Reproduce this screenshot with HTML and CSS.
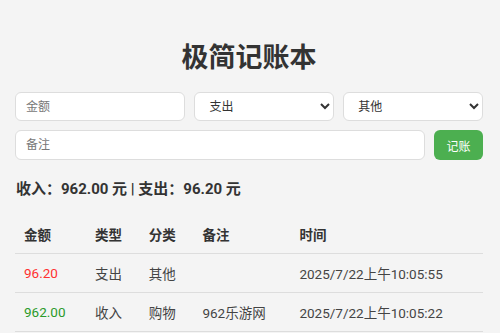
FILE: index.html
```html
<!DOCTYPE html>
<html lang="zh-CN">
<head>
  <meta charset="UTF-8">
  <title>极简记账本</title>
  <link rel="stylesheet" href="styles.css">
</head>
<body>
  <div class="container">
    <h1>极简记账本</h1>

    <div class="form-row">
      <input type="number" id="amount" placeholder="金额">
      <select id="type">
        <option>支出</option>
        <option>收入</option>
      </select>
      <select id="category">
        <option>其他</option>
        <option>购物</option>
        <option>餐饮</option>
      </select>
    </div>

    <div class="form-row second">
      <input type="text" id="note" placeholder="备注">
      <button id="addBtn">记账</button>
    </div>

    <p class="summary">收入：962.00 元 | 支出：96.20 元</p>

    <table class="records">
      <thead>
        <tr>
          <th>金额</th>
          <th>类型</th>
          <th>分类</th>
          <th>备注</th>
          <th>时间</th>
        </tr>
      </thead>
      <tbody>
        <tr>
          <td class="expense">96.20</td>
          <td>支出</td>
          <td>其他</td>
          <td></td>
          <td>2025/7/22上午10:05:55</td>
        </tr>
        <tr>
          <td class="income">962.00</td>
          <td>收入</td>
          <td>购物</td>
          <td>962乐游网</td>
          <td>2025/7/22上午10:05:22</td>
        </tr>
      </tbody>
    </table>
  </div>
</body>
</html>
```

FILE: styles.css
```css
body {
  font-family: Roboto, "Noto Sans CJK SC", sans-serif;
  background: #f4f4f4;
  color: #333;
  margin: 0;
}

.container {
  max-width: 468px;
  margin: 0 15px;
}

h1 {
  text-align: center;
  font-size: 27px;
  margin: 40px 0 16px;
  line-height: 36px;
  color: #333;
}

.form-row {
  display: grid;
  grid-template-columns: minmax(0, 1.22fr) minmax(0, 1fr) minmax(0, 1fr);
  gap: 9px;
  margin-bottom: 9px;
}

.form-row.second {
  grid-template-columns: minmax(0, 1fr) 49px;
}

input,
select {
  width: 100%;
  height: 29px;
  box-sizing: border-box;
  padding: 0 10px;
  font-family: inherit;
  font-size: 12px;
  color: #333;
  background: #fff;
  border: 1px solid #ddd;
  border-radius: 6px;
  outline: none;
}

.second input {
  height: 30px;
}

input::placeholder {
  color: #777;
}

#addBtn {
  height: 30px;
  background-color: #4caf50;
  color: #fff;
  border: none;
  border-radius: 6px;
  font-family: inherit;
  font-size: 12px;
  cursor: pointer;
}

.summary {
  font-size: 15px;
  font-weight: bold;
  margin: 17px 0 17px 1px;
}

.records {
  width: 100%;
  border-collapse: collapse;
  font-size: 13.5px;
}

.records th,
.records td {
  text-align: left;
  padding: 9px 9px;
  height: 20px;
  border-bottom: 1px solid #ddd;
}

.records th {
  font-weight: bold;
}

.records td {
  color: #444;
}

.records td.expense {
  color: #ff3030;
}

.records td.income {
  color: #2a9a2a;
}
```
